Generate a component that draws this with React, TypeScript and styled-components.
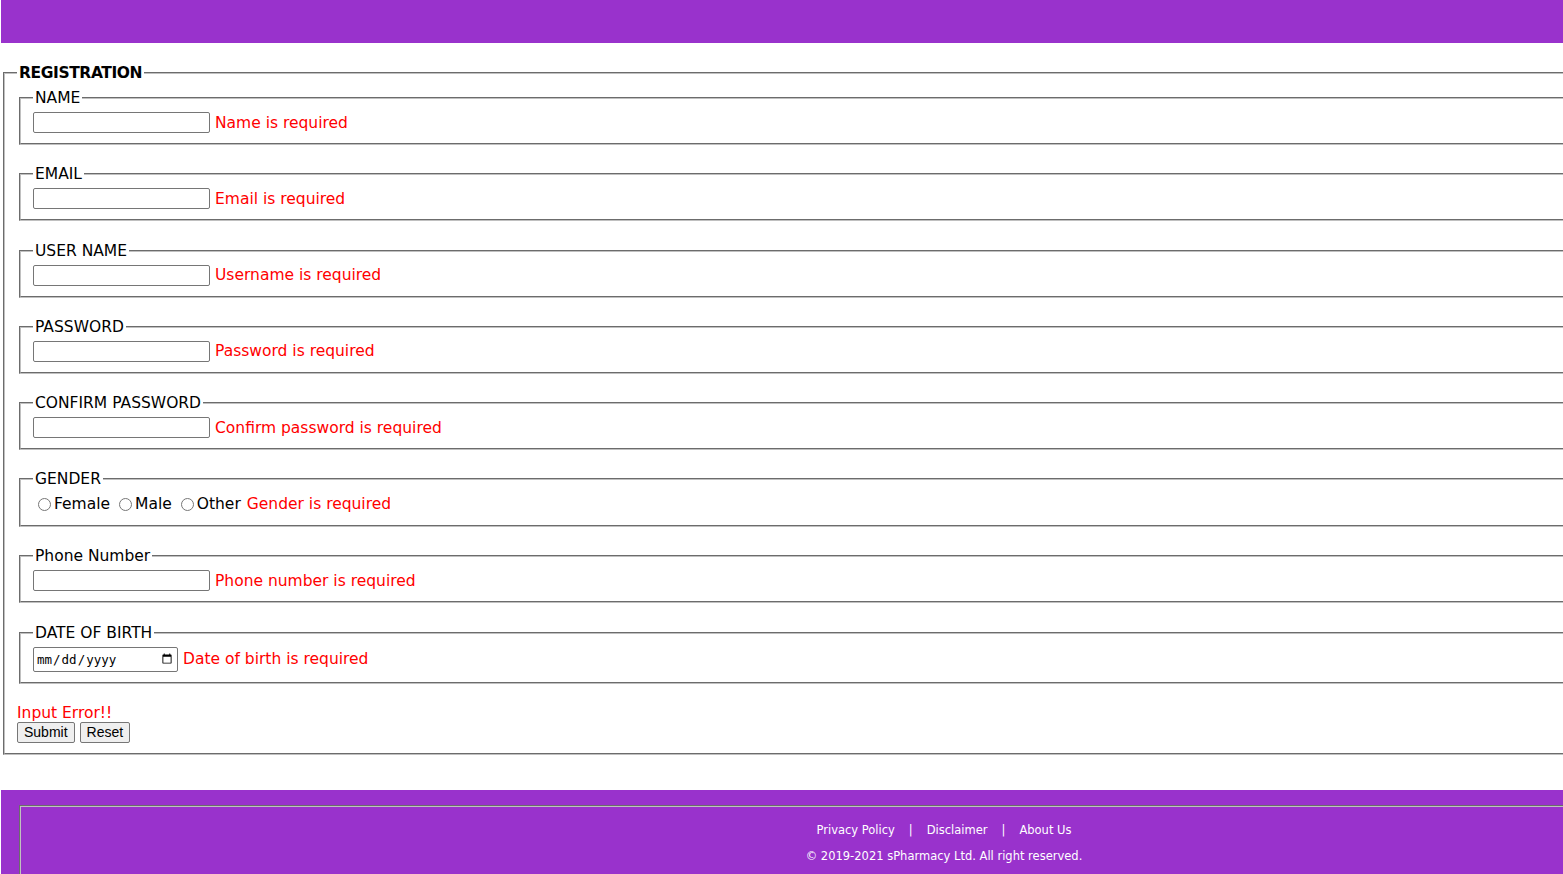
import React from 'react'
import styled, { createGlobalStyle } from 'styled-components'

const GlobalStyle = createGlobalStyle`
html, body {
  margin: 0;
  padding: 0;
  overflow: hidden;
  background: #ffffff;
}
body {
  font-family: "DejaVu Sans", "Liberation Sans", sans-serif;
  font-size: 15.5px;
  color: #000000;
}
`

const fields = [
  { legend: 'NAME', error: 'Name is required' },
  { legend: 'EMAIL', error: 'Email is required' },
  { legend: 'USER NAME', error: 'Username is required' },
  { legend: 'PASSWORD', error: 'Password is required', type: 'password' },
  { legend: 'CONFIRM PASSWORD', error: 'Confirm password is required', type: 'password' },
]

const App = () => {
  return (
    <Page>
      <GlobalStyle />
      <Header />
      <Main>
        <Outer>
          <Title>REGISTRATION</Title>
          {fields.map((f) => (
            <Group key={f.legend}>
              <Label>{f.legend}</Label>
              <Row>
                <TextInput type={f.type || 'text'} />
                <Error>{f.error}</Error>
              </Row>
            </Group>
          ))}
          <Group>
            <Label>GENDER</Label>
            <Row $tall>
              <Radio type="radio" name="gender" id="female" />
              <RadioLabel htmlFor="female">Female</RadioLabel>
              <Radio type="radio" name="gender" id="male" />
              <RadioLabel htmlFor="male">Male</RadioLabel>
              <Radio type="radio" name="gender" id="other" />
              <RadioLabel htmlFor="other">Other</RadioLabel>
              <Error $shift>Gender is required</Error>
            </Row>
          </Group>
          <Group>
            <Label>Phone Number</Label>
            <Row>
              <TextInput type="text" />
              <Error>Phone number is required</Error>
            </Row>
          </Group>
          <Group>
            <Label>DATE OF BIRTH</Label>
            <Row>
              <DateInput type="date" />
              <Error>Date of birth is required</Error>
            </Row>
          </Group>
          <FormError>Input Error!!</FormError>
          <Buttons>
            <Button type="submit">Submit</Button>
            <Button type="reset">Reset</Button>
          </Buttons>
        </Outer>
      </Main>
      <Footer>
        <FooterBox>
          <Links>
            <Link>Privacy Policy</Link>
            <Sep>|</Sep>
            <Link>Disclaimer</Link>
            <Sep>|</Sep>
            <Link>About Us</Link>
          </Links>
          <Copy>© 2019-2021 sPharmacy Ltd. All right reserved.</Copy>
        </FooterBox>
      </Footer>
    </Page>
  )
}

export default App

const Page = styled.div`
width: 1886px;
margin-left: 1px;
`
const Header = styled.div`
height: 43px;
background-color: #9932cc;
`
const Main = styled.form`
padding-top: 21px;
padding-bottom: 35px;
`
const Outer = styled.fieldset`
margin: 0 2px;
padding: 7px 12px 10px;
border: 2px groove #c0c0c0;
`
const Title = styled.legend`
padding: 0 2px;
font-weight: bold;
letter-spacing: -0.4px;
`
const Group = styled.fieldset`
margin: 0 2px 20.3px;
padding: 5px 12px 10px;
border: 2px groove #c0c0c0;
`
const Label = styled.legend`
padding: 0 2px;
`
const Row = styled.div<{ $tall?: boolean }>`
display: flex;
align-items: center;
gap: 5px;
min-height: ${(p) => (p.$tall ? '21.5px' : '21px')};
`
const TextInput = styled.input`
box-sizing: border-box;
width: 177px;
height: 21px;
margin: 0;
border: 1px solid #767676;
border-radius: 2px;
padding: 1px 2px;
`
const DateInput = styled.input`
box-sizing: border-box;
width: 145px;
height: 25px;
margin: 0;
border: 1px solid #767676;
border-radius: 2px;
padding: 1px 2px;
font-family: "DejaVu Sans Mono", monospace;
font-size: 12.5px;
`
const Radio = styled.input`
width: 13px;
height: 13px;
margin: 1px 0 0 5px;
accent-color: #767676;
`
const RadioLabel = styled.label`
margin-left: -2px;
margin-right: -1px;
`
const Error = styled.span<{ $shift?: boolean }>`
color: #ff0000;
margin-left: ${(p) => (p.$shift ? '2px' : '0')};
`
const FormError = styled.div`
color: #ff0000;
margin-top: 4px;
`
const Buttons = styled.div`
display: flex;
gap: 5px;
`
const Button = styled.button`
font-family: "Liberation Sans", Arial, sans-serif;
font-size: 14px;
height: 21px;
padding: 0 6px;
border: 1px solid #767676;
border-radius: 2px;
background: #efefef;
color: #000000;
`
const Footer = styled.footer`
background-color: #9932cc;
padding: 15px 18px 0;
height: 120px;
`
const FooterBox = styled.div`
border: 2px groove #c0c0c0;
border-bottom: none;
height: 100%;
padding-top: 16px;
text-align: center;
color: #ffffff;
font-size: 11.5px;
`
const Links = styled.div`
display: flex;
justify-content: center;
`
const Link = styled.span``
const Sep = styled.span`
padding: 0 14px;
`
const Copy = styled.div`
margin-top: 12px;
`
